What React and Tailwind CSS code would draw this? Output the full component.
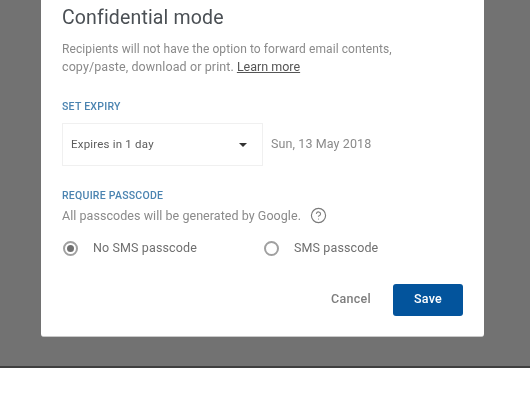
import React from 'react'
import { CircleHelp } from 'lucide-react'

function Radio({ checked, label, className }) {
    return (
        <label className={`flex items-center ${className}`}>
            <span className="ml-[1px] w-[15px] h-[15px] rounded-full border-2 border-[#a0a0a0] flex items-center justify-center shrink-0">
                {checked && <span className="w-[7px] h-[7px] rounded-full bg-[#707070]"></span>}
            </span>
            <span className="ml-[15px] text-[12.5px] tracking-[0.12px] text-[#6f6f6f]">{label}</span>
        </label>
    )
}

function App() {
    return (
        <div className="w-[530px] h-[405px] bg-white overflow-hidden font-['Roboto',sans-serif]">
            <div className="blur-[0.6px]">
                <div className="h-[368px] bg-[#727272] border-b-2 border-[#3f3f3f] pl-[41px] pr-[46px]">
                    <div className="h-[337px] bg-white rounded-b-[3px] border-b border-[#c9c9c9] pl-[21px] pr-[21px] flex flex-col">
                        <h2 className="mt-[5px] text-[19.5px] leading-[26px] text-[#4a4f54] tracking-[0.15px]">Confidential mode</h2>
                        <p className="mt-[9px] text-[12px] leading-[18px] text-[#8a8a8a]">
                            <span className="tracking-[0.09px]">Recipients will not have the option to forward email contents,</span><br />
                            <span className="text-[12.5px] tracking-[0.1px]">copy/paste, download or print.</span> <span className="text-[12.5px] text-[#555] underline">Learn more</span>
                        </p>
                        <div className="mt-[24px] text-[10.5px] leading-[14px] font-medium tracking-[0.25px] text-[#4a83b0]">SET EXPIRY</div>
                        <div className="mt-[9px] flex items-center">
                            <div className="w-[201px] h-[43px] border border-[#f0f0f0] flex items-center justify-between pl-[8px] pr-[15px]">
                                <span className="text-[11.5px] tracking-[0.2px] text-[#5c5c5c]">Expires in 1 day</span>
                                <span className="w-0 h-0 border-x-[4px] border-x-transparent border-t-[4px] border-t-[#333]"></span>
                            </div>
                            <span className="ml-[8px] text-[12.5px] tracking-[0.1px] text-[#8a8a8a]">Sun, 13 May 2018</span>
                        </div>
                        <div className="mt-[23px] text-[10.5px] leading-[14px] font-medium tracking-[0.25px] text-[#4a83b0]">REQUIRE PASSCODE</div>
                        <div className="mt-[4px] flex items-center text-[12.5px] leading-[16px] tracking-[0.05px] text-[#8a8a8a]">
                            All passcodes will be generated by Google.
                            <CircleHelp className="ml-[9px] text-[#7a7a7a]" size={17} strokeWidth={1.6} />
                        </div>
                        <div className="mt-[15px] flex items-center">
                            <Radio checked label="No SMS passcode" className="w-[201px]" />
                            <Radio label="SMS passcode" className="" />
                        </div>
                        <div className="mt-[26px] flex items-center justify-end">
                            <button className="text-[12.5px] font-medium tracking-[0.3px] text-[#7d7d7d]">Cancel</button>
                            <button className="ml-[22px] w-[70px] h-[32px] rounded-[3px] bg-[#03549c] text-white text-[12.5px] font-medium tracking-[0.3px]">Save</button>
                        </div>
                    </div>
                </div>
            </div>
        </div>
    )
}

export default App
